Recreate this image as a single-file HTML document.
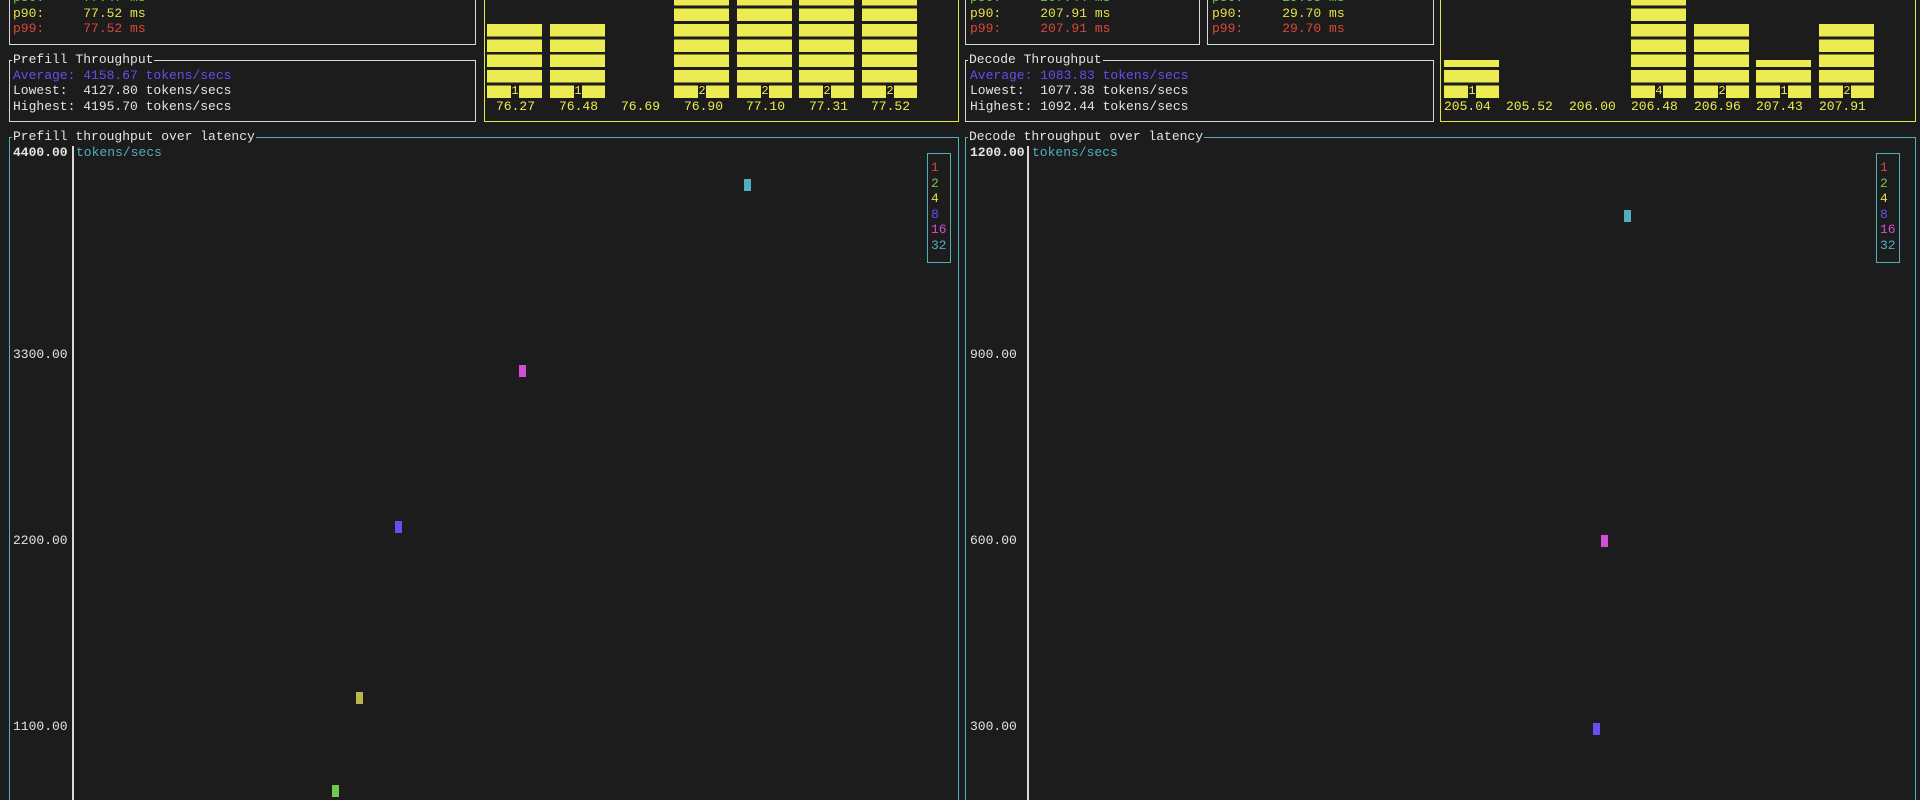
<!DOCTYPE html>
<html><head><meta charset="utf-8"><style>
html,body{margin:0;padding:0;background:#1c1c1c;width:1920px;height:800px;overflow:hidden;}
body{position:relative;font-family:"Liberation Mono","DejaVu Sans Mono",monospace;font-size:13px;color:#e4e4e4;}
.t{position:absolute;line-height:15px;white-space:pre;}
.b{position:absolute;box-sizing:border-box;border:1.5px solid #d8d8d8;}
.y{border-color:#e3e34a;}
.c{border-color:#4fb0bb;}
.title{position:absolute;background:#1c1c1c;line-height:15px;white-space:pre;padding:0 1px;}
.bar{position:absolute;width:55px;background:repeating-linear-gradient(to top,#ecec52 0 12.5px,transparent 12.5px 15.4px);}
.dg{position:absolute;width:8px;height:12.5px;background:#1c1c1c;color:#ecec52;font-size:12px;line-height:12.5px;text-align:center;}
.lb{position:absolute;color:#ecec52;line-height:15px;white-space:pre;}
.pt{position:absolute;width:7px;height:12px;}
.ax{position:absolute;width:1.5px;background:#d8d8d8;}
.gr{color:#6fc94a}.ye{color:#e3e34a}.re{color:#d9483b}.pu{color:#6a4cf0}.ma{color:#d14fd6}.cy{color:#4fb0bb}
</style></head><body>

<!-- left top stats box -->
<div class="b" style="left:9px;top:-20px;width:467px;height:65px"></div>
<div class="t gr" style="left:13px;top:-10px">p50:     77.47 ms</div>
<div class="t ye" style="left:13px;top:6px">p90:     77.52 ms</div>
<div class="t re" style="left:13px;top:21px">p99:     77.52 ms</div>

<!-- prefill throughput -->
<div class="b" style="left:9px;top:60px;width:467px;height:62px"></div>
<div class="title" style="left:12px;top:52px">Prefill Throughput</div>
<div class="t pu" style="left:13px;top:68px">Average: 4158.67 tokens/secs</div>
<div class="t" style="left:13px;top:83px">Lowest:  4127.80 tokens/secs</div>
<div class="t" style="left:13px;top:99px">Highest: 4195.70 tokens/secs</div>

<!-- left histogram -->
<div class="b y" style="left:484px;top:-20px;width:475px;height:142px"></div>
<div class="bar" style="left:487px;top:24px;height:73.5px"></div>
<div class="bar" style="left:550px;top:24px;height:73.5px"></div>
<div class="bar" style="left:674px;top:-10px;height:107.5px"></div>
<div class="bar" style="left:737px;top:-10px;height:107.5px"></div>
<div class="bar" style="left:799px;top:-10px;height:107.5px"></div>
<div class="bar" style="left:862px;top:-10px;height:107.5px"></div>
<div class="dg" style="left:511px;top:85px">1</div>
<div class="dg" style="left:574px;top:85px">1</div>
<div class="dg" style="left:698px;top:85px">2</div>
<div class="dg" style="left:761px;top:85px">2</div>
<div class="dg" style="left:823px;top:85px">2</div>
<div class="dg" style="left:886px;top:85px">2</div>
<div class="lb" style="left:496px;top:99px">76.27</div>
<div class="lb" style="left:559px;top:99px">76.48</div>
<div class="lb" style="left:621px;top:99px">76.69</div>
<div class="lb" style="left:684px;top:99px">76.90</div>
<div class="lb" style="left:746px;top:99px">77.10</div>
<div class="lb" style="left:809px;top:99px">77.31</div>
<div class="lb" style="left:871px;top:99px">77.52</div>

<!-- left chart -->
<div class="b c" style="left:9px;top:137px;width:950px;height:700px"></div>
<div class="title" style="left:12px;top:129px">Prefill throughput over latency</div>
<div class="ax" style="left:72px;top:146px;height:660px"></div>
<div class="t" style="left:13px;top:145px;font-weight:bold">4400.00</div>
<div class="t cy" style="left:76px;top:145px">tokens/secs</div>
<div class="t" style="left:13px;top:347px">3300.00</div>
<div class="t" style="left:13px;top:533px">2200.00</div>
<div class="t" style="left:13px;top:719px">1100.00</div>
<div class="b c" style="left:927px;top:153px;width:24px;height:110px"></div>
<div class="t re" style="left:931px;top:160px">1</div>
<div class="t gr" style="left:931px;top:176px">2</div>
<div class="t ye" style="left:931px;top:191px">4</div>
<div class="t pu" style="left:931px;top:207px">8</div>
<div class="t ma" style="left:931px;top:222px">16</div>
<div class="t cy" style="left:931px;top:238px">32</div>
<div class="pt" style="left:744px;top:179px;background:#4fb0bb"></div>
<div class="pt" style="left:519px;top:365px;background:#d14fd6"></div>
<div class="pt" style="left:395px;top:521px;background:#6a4cf0"></div>
<div class="pt" style="left:356px;top:692px;background:#b8b84a"></div>
<div class="pt" style="left:332px;top:785px;background:#6fc94a"></div>

<!-- right top stat boxes -->
<div class="b" style="left:965px;top:-20px;width:235px;height:65px"></div>
<div class="t gr" style="left:970px;top:-10px">p50:     207.44 ms</div>
<div class="t ye" style="left:970px;top:6px">p90:     207.91 ms</div>
<div class="t re" style="left:970px;top:21px">p99:     207.91 ms</div>
<div class="b" style="left:1207px;top:-20px;width:227px;height:65px"></div>
<div class="t gr" style="left:1212px;top:-10px">p50:     29.65 ms</div>
<div class="t ye" style="left:1212px;top:6px">p90:     29.70 ms</div>
<div class="t re" style="left:1212px;top:21px">p99:     29.70 ms</div>

<!-- decode throughput -->
<div class="b" style="left:965px;top:60px;width:469px;height:62px"></div>
<div class="title" style="left:968px;top:52px">Decode Throughput</div>
<div class="t pu" style="left:970px;top:68px">Average: 1083.83 tokens/secs</div>
<div class="t" style="left:970px;top:83px">Lowest:  1077.38 tokens/secs</div>
<div class="t" style="left:970px;top:99px">Highest: 1092.44 tokens/secs</div>

<!-- right histogram -->
<div class="b y" style="left:1440px;top:-20px;width:476px;height:142px"></div>
<div class="bar" style="left:1444px;top:60px;height:37.5px"></div>
<div class="bar" style="left:1631px;top:-10px;height:107.5px"></div>
<div class="bar" style="left:1694px;top:24px;height:73.5px"></div>
<div class="bar" style="left:1756px;top:60px;height:37.5px"></div>
<div class="bar" style="left:1819px;top:24px;height:73.5px"></div>
<div class="dg" style="left:1468px;top:85px">1</div>
<div class="dg" style="left:1655px;top:85px">4</div>
<div class="dg" style="left:1718px;top:85px">2</div>
<div class="dg" style="left:1780px;top:85px">1</div>
<div class="dg" style="left:1843px;top:85px">2</div>
<div class="lb" style="left:1444px;top:99px">205.04</div>
<div class="lb" style="left:1506px;top:99px">205.52</div>
<div class="lb" style="left:1569px;top:99px">206.00</div>
<div class="lb" style="left:1631px;top:99px">206.48</div>
<div class="lb" style="left:1694px;top:99px">206.96</div>
<div class="lb" style="left:1756px;top:99px">207.43</div>
<div class="lb" style="left:1819px;top:99px">207.91</div>

<!-- right chart -->
<div class="b c" style="left:965px;top:137px;width:951px;height:700px"></div>
<div class="title" style="left:968px;top:129px">Decode throughput over latency</div>
<div class="ax" style="left:1027px;top:146px;height:660px"></div>
<div class="t" style="left:970px;top:145px;font-weight:bold">1200.00</div>
<div class="t cy" style="left:1032px;top:145px">tokens/secs</div>
<div class="t" style="left:970px;top:347px">900.00</div>
<div class="t" style="left:970px;top:533px">600.00</div>
<div class="t" style="left:970px;top:719px">300.00</div>
<div class="b c" style="left:1876px;top:153px;width:24px;height:110px"></div>
<div class="t re" style="left:1880px;top:160px">1</div>
<div class="t gr" style="left:1880px;top:176px">2</div>
<div class="t ye" style="left:1880px;top:191px">4</div>
<div class="t pu" style="left:1880px;top:207px">8</div>
<div class="t ma" style="left:1880px;top:222px">16</div>
<div class="t cy" style="left:1880px;top:238px">32</div>
<div class="pt" style="left:1624px;top:210px;background:#4fb0bb"></div>
<div class="pt" style="left:1601px;top:535px;background:#d14fd6"></div>
<div class="pt" style="left:1593px;top:723px;background:#6a4cf0"></div>

</body></html>
